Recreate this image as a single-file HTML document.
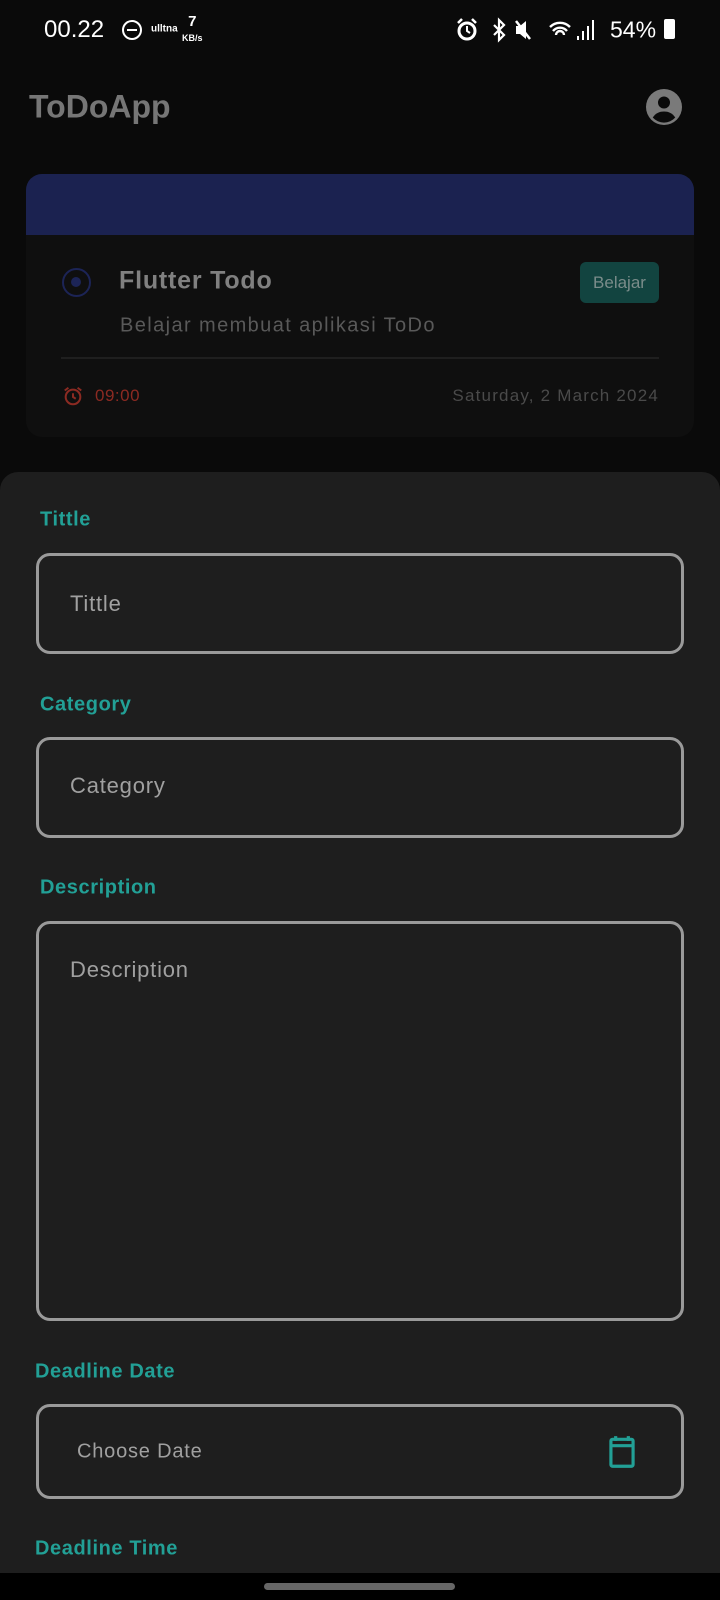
<!DOCTYPE html><html><head><style>
*{margin:0;padding:0;box-sizing:border-box}
body{width:720px;height:1600px;background:#0a0a0a;position:relative;overflow:hidden;font-family:"Liberation Sans",sans-serif}
.a{position:absolute;white-space:nowrap}
.lbl{position:absolute;color:#22a096;font-weight:bold;font-size:20px;letter-spacing:0.6px;transform:translateY(-50%)}
.inp{position:absolute;left:36px;width:648px;border:3px solid #9a9a9a;border-radius:14px}
.ph{position:absolute;color:#a0a0a0;font-size:22px;letter-spacing:0.8px;transform:translateY(-50%)}
.c{transform:translateY(-50%)}
</style></head><body>
<div class="a c" style="left:44px;top:30px;color:#fff;font-size:24px">00.22</div>
<div class="a" style="left:122px;top:20px;width:20px;height:20px;border:2px solid #fff;border-radius:50%"><div style="margin:7px 3px;height:2px;background:#fff"></div></div>
<div class="a c" style="left:151px;top:29px;color:#fff;font-size:10px;font-weight:bold">ulltna</div>
<div class="a" style="left:182px;top:14px;color:#fff;font-size:15px;line-height:15px;text-align:center;font-weight:bold">7<br><span style="font-size:9px">KB/s</span></div>
<svg class="a" style="left:456px;top:17px" width="220" height="26" viewBox="0 0 220 26" fill="#fff" stroke="#fff">
<circle cx="11" cy="14" r="8" fill="none" stroke-width="3"/><path d="M11 9v5l3 2" fill="none" stroke-width="2"/><path d="M2 6l4-4M20 6l-4-4" stroke-width="2.5"/>
<path d="M38 8l10 10-5 5V3l5 5-10 10" fill="none" stroke-width="2.2"/>
<path d="M60 9h4l6-5v18l-6-5h-4z" stroke="none"/><path d="M60 4l14 18" stroke-width="2.5"/>
<path d="M94 10a14 14 0 0 1 20 0M97 14a9 9 0 0 1 14 0M100 18a4 4 0 0 1 8 0" fill="none" stroke-width="2.4"/>
<rect x="121" y="19" width="2" height="4" stroke="none"/><rect x="126" y="14" width="2" height="9" stroke="none"/><rect x="131" y="9" width="2" height="14" stroke="none"/><rect x="136" y="3" width="2" height="20" stroke="none"/>
</svg>
<div class="a c" style="left:610px;top:30px;color:#fff;font-size:23px">54%</div>
<div class="a" style="left:664px;top:19px;width:11px;height:20px;background:#fff;border-radius:2px"></div>
<div class="a c" style="left:29px;top:107px;color:#767676;font-size:32px;font-weight:bold">ToDoApp</div>
<svg class="a" style="left:646px;top:89px" width="36" height="36" viewBox="0 0 24 24"><circle cx="12" cy="12" r="12" fill="#7a7a7a"/><circle cx="12" cy="9" r="4" fill="#0a0a0a"/><path d="M4.5 19c2-3 4.5-4 7.5-4s5.5 1 7.5 4a10 10 0 0 1-15 0z" fill="#0a0a0a"/></svg>
<div class="a" style="left:26px;top:174px;width:668px;height:263px;background:#0f0f0f;border-radius:16px;overflow:hidden"><div style="height:61px;background:#1b2250"></div></div>
<div class="a" style="left:62px;top:268px;width:29px;height:29px;border:2.5px solid #1c2456;border-radius:50%"><div style="width:10px;height:10px;margin:7px;background:#1c2456;border-radius:50%"></div></div>
<div class="a c" style="left:119px;top:281px;color:#808080;font-size:25px;font-weight:bold;letter-spacing:0.8px">Flutter Todo</div>
<div class="a" style="left:580px;top:262px;width:79px;height:41px;background:#124440;border-radius:6px;color:#7a8c8a;font-size:17px;line-height:41px;text-align:center">Belajar</div>
<div class="a c" style="left:120px;top:326px;color:#595959;font-size:20px;letter-spacing:1.4px">Belajar membuat aplikasi ToDo</div>
<div class="a" style="left:61px;top:357px;width:598px;height:2px;background:#1f1f1f"></div>
<svg class="a" style="left:62px;top:385px" width="22" height="22" viewBox="0 0 24 24" fill="none" stroke="#8b2a22" stroke-width="2.2"><circle cx="12" cy="13" r="8"/><path d="M12 9v4l3 2M3 6l4-3M21 6l-4-3"/></svg>
<div class="a c" style="left:95px;top:396px;color:#8b2a22;font-size:17px;letter-spacing:0.5px">09:00</div>
<div class="a c" style="right:61px;top:396px;color:#4a4a4a;font-size:17px;letter-spacing:1.2px">Saturday, 2 March 2024</div>
<div class="a" style="left:0;top:472px;width:720px;height:1110px;background:#1e1e1e;border-radius:18px 18px 0 0"></div>
<div class="lbl" style="left:40px;top:520px">Tittle</div>
<div class="inp" style="top:553px;height:101px"></div><div class="ph" style="left:70px;top:604px">Tittle</div>
<div class="lbl" style="left:40px;top:705px">Category</div>
<div class="inp" style="top:737px;height:101px"></div><div class="ph" style="left:70px;top:786px">Category</div>
<div class="lbl" style="left:40px;top:888px">Description</div>
<div class="inp" style="top:921px;height:400px"></div><div class="ph" style="left:70px;top:970px">Description</div>
<div class="lbl" style="left:35px;top:1372px">Deadline Date</div>
<div class="inp" style="top:1404px;height:95px"></div>
<div class="ph" style="left:77px;top:1452px;font-size:20px">Choose Date</div>
<svg class="a" style="left:603px;top:1433px" width="38" height="38" viewBox="0 0 24 24" fill="none" stroke="#22a096" stroke-width="2"><rect x="5" y="4" width="14" height="17" rx="1"/><path d="M5 8h14M8 2v3M16 2v3"/></svg>
<div class="lbl" style="left:35px;top:1549px">Deadline Time</div>
<div class="a" style="left:0;top:1573px;width:720px;height:27px;background:#000"></div>
<div class="a" style="left:264px;top:1583px;width:191px;height:7px;background:#666;border-radius:4px"></div>
</body></html>
